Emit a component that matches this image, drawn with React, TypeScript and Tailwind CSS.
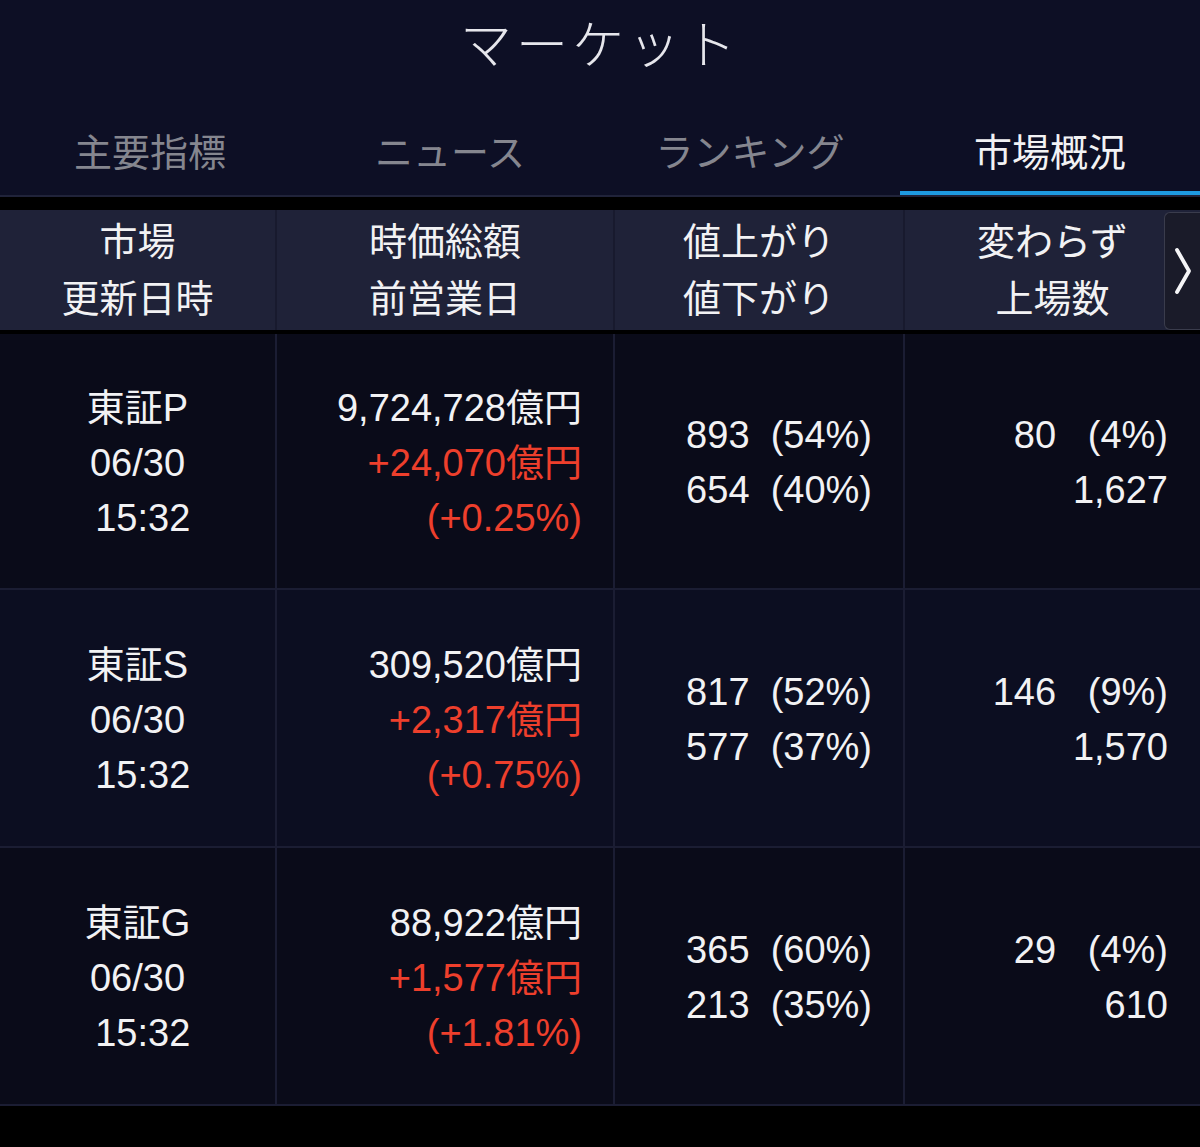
import React from "react";

const FONT = { fontFamily: '"Liberation Sans", "Noto Sans CJK JP", sans-serif' };

type Row = {
  market: string;
  total: string;
  change: string;
  pct: string;
  up: string;
  down: string;
  flat: string;
  listed: string;
  bg: string;
};

const rows: Row[] = [
  { market: "東証P", total: "9,724,728億円", change: "+24,070億円", pct: "(+0.25%)", up: "893  (54%)", down: "654  (40%)", flat: "80   (4%)", listed: "1,627", bg: "bg-[#0a0b19]" },
  { market: "東証S", total: "309,520億円", change: "+2,317億円", pct: "(+0.75%)", up: "817  (52%)", down: "577  (37%)", flat: "146   (9%)", listed: "1,570", bg: "bg-[#0c0e21]" },
  { market: "東証G", total: "88,922億円", change: "+1,577億円", pct: "(+1.81%)", up: "365  (60%)", down: "213  (35%)", flat: "29   (4%)", listed: "610", bg: "bg-[#0a0b19]" },
];

const tabs = ["主要指標", "ニュース", "ランキング", "市場概況"];

export default function App() {
  return (
    <div className="w-[1200px] h-[1147px] bg-black text-[#f2f2f4] overflow-hidden" style={FONT}>
      {/* Top header */}
      <div className="bg-[#0d0f25]">
        <div className="h-[92px] flex items-center justify-center">
          <span className="text-[52px] tracking-[4px] text-[#e6e6ec] font-light leading-none">マーケット</span>
        </div>
        <div className="h-[105px] flex border-b-[2px] border-[#20233a]">
          {tabs.map((t, i) => (
            <div key={t} className="flex-1 flex flex-col">
              <div
                className={
                  "flex-1 flex items-center justify-center pt-[22px] text-[38px] leading-none " +
                  (i === 3 ? "text-[#f2f2f4]" : "text-[#85868f]")
                }
              >
                {t}
              </div>
              <div className={"h-[4px] " + (i === 3 ? "bg-[#1e9be2]" : "bg-transparent")} />
            </div>
          ))}
        </div>
      </div>

      <div className="h-[13px] bg-black" />

      {/* Column header */}
      <div className="relative h-[120px] bg-[#1f2238] grid grid-cols-[277px_338px_290px_295px] text-[38px] leading-[57px]">
        <div className="flex flex-col items-center justify-center pt-[2px] border-r-[2px] border-[#181a2e]">
          <span>市場</span>
          <span>更新日時</span>
        </div>
        <div className="flex flex-col items-center justify-center pt-[2px] border-r-[2px] border-[#181a2e]">
          <span>時価総額</span>
          <span>前営業日</span>
        </div>
        <div className="flex flex-col items-center justify-center pt-[2px] border-r-[2px] border-[#181a2e]">
          <span>値上がり</span>
          <span>値下がり</span>
        </div>
        <div className="flex flex-col items-center justify-center pt-[2px]">
          <span>変わらず</span>
          <span>上場数</span>
        </div>
        <div className="absolute right-0 top-[2px] bottom-0 w-[36px] bg-[#1a1b29] border border-r-0 border-[#3a3c4c] rounded-l-[6px] flex items-center justify-center">
          <svg width="20" height="50" viewBox="0 0 20 50" fill="none">
            <path d="M4 4 L16 25 L4 46" stroke="#f5f5f7" strokeWidth="3.8" strokeLinecap="round" strokeLinejoin="round" />
          </svg>
        </div>
      </div>

      <div className="h-[4px] bg-black" />

      {/* Data rows */}
      {rows.map((r, idx) => (
        <div
          key={r.market}
          className={
            "grid grid-cols-[277px_338px_290px_295px] border-b-[2px] border-[#1b1d33] text-[38px] leading-[55px] " +
            r.bg +
            (idx === 0 ? " h-[256px]" : " h-[258px]")
          }
        >
          <div className="flex flex-col items-center justify-center pt-[4px] border-r-[2px] border-[#1b1d33] whitespace-pre">
            <span>{r.market}</span>
            <span>06/30</span>
            <span> 15:32</span>
          </div>
          <div className="flex flex-col items-end justify-center pt-[4px] pr-[31px] border-r-[2px] border-[#1b1d33]">
            <span>{r.total}</span>
            <span className="text-[#ee3f2c]">{r.change}</span>
            <span className="text-[#ee3f2c]">{r.pct}</span>
          </div>
          <div className="flex flex-col items-end justify-center pt-[4px] pr-[31px] border-r-[2px] border-[#1b1d33] whitespace-pre">
            <span>{r.up}</span>
            <span>{r.down}</span>
          </div>
          <div className="flex flex-col items-end justify-center pt-[4px] pr-[32px] whitespace-pre">
            <span>{r.flat}</span>
            <span>{r.listed}</span>
          </div>
        </div>
      ))}
    </div>
  );
}
